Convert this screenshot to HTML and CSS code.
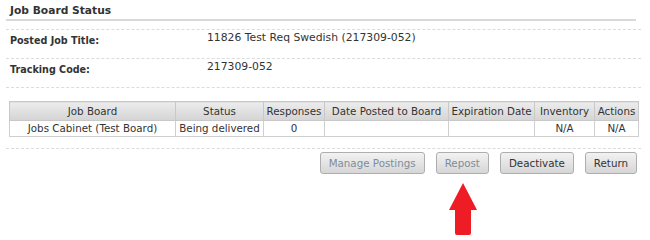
FILE: index.html
```html
<!DOCTYPE html>
<html>
<head>
<meta charset="utf-8">
<link rel="stylesheet" href="styles.css">
</head>
<body>
<div class="wrap">
  <h2 class="title">Job Board Status</h2>
  <div class="field">
    <div class="label">Posted Job Title:</div>
    <div class="value">11826 Test Req Swedish (217309-052)</div>
  </div>
  <div class="field">
    <div class="label">Tracking Code:</div>
    <div class="value">217309-052</div>
  </div>
  <div class="table-area">
    <table class="grid">
      <colgroup>
        <col class="c1"><col class="c2"><col class="c3"><col class="c4"><col class="c5"><col class="c6"><col class="c7">
      </colgroup>
      <thead>
        <tr>
          <th>Job Board</th><th>Status</th><th>Responses</th><th>Date Posted to Board</th><th>Expiration Date</th><th>Inventory</th><th>Actions</th>
        </tr>
      </thead>
      <tbody>
        <tr>
          <td>Jobs Cabinet (Test Board)</td><td>Being delivered</td><td>0</td><td></td><td></td><td>N/A</td><td>N/A</td>
        </tr>
      </tbody>
    </table>
  </div>
  <div class="actions">
    <button class="btn disabled">Manage Postings</button>
    <button class="btn disabled">Repost</button>
    <button class="btn">Deactivate</button>
    <button class="btn">Return</button>
  </div>
</div>
<svg class="arrow" width="30" height="53" viewBox="0 0 30 53">
  <path d="M14 0 L28 27 L22 27 L22 50 Q22 52 20 52 L8 52 Q6 52 6 50 L6 27 L0 27 Z" fill="#ee1c24"/>
</svg>
</body>
</html>
```
FILE: styles.css
```css
body {
  margin: 0;
  font-family: "DejaVu Sans", Verdana, sans-serif;
  font-size: 11px;
  color: #333;
  background: #fff;
  position: relative;
  width: 650px;
  height: 237px;
  overflow: hidden;
}
.wrap {
  margin-left: 6px;
  width: 635px;
}
.title {
  margin: 0;
  width: 626px;
  height: 19px;
  padding: 0 0 0 4px;
  font-size: 10.7px;
  font-weight: bold;
  line-height: 22px;
  border-bottom: 2px solid #d9d9d9;
  box-sizing: content-box;
}
.field {
  margin-top: 8px;
  border-top: 1px dashed #dcdcdc;
  display: flex;
  height: 28px;
}
.field + .field {
  margin-top: 0;
}
.label {
  width: 197px;
  padding-left: 4px;
  font-weight: bold;
  font-size: 9.6px;
  padding-top: 3px;
  line-height: 16px;
}
.value {
  padding-top: 0;
  line-height: 16px;
  font-size: 10.8px;
}
.table-area {
  border-top: 1px dashed #dcdcdc;
  padding: 13px 0 11px 3px;
  border-bottom: 1px dashed #dcdcdc;
}
.grid {
  border-collapse: collapse;
  width: 629px;
  table-layout: fixed;
  font-size: 10.3px;
}
.c1 { width: 166px; }
.c2 { width: 88px; }
.c3 { width: 61px; }
.c4 { width: 124px; }
.c5 { width: 86px; }
.c6 { width: 60px; }
.c7 { width: 44px; }
.grid th, .grid td {
  border: 1px solid #cfcfcf;
  text-align: center;
  padding: 0 1px;
  white-space: nowrap;
  overflow: hidden;
}
.grid th {
  font-weight: normal;
  height: 18px;
  line-height: 18px;
  background: linear-gradient(#ececec, #d4d4d4);
  border-color: #c8c8c8;
}
.grid th + th {
  border-left-color: #ececec;
}
.grid td {
  height: 15px;
  line-height: 15px;
  background: #fff;
}
.actions {
  display: flex;
  justify-content: flex-end;
  gap: 11px;
  padding-top: 3px;
  padding-right: 4px;
}
.btn {
  font-family: "DejaVu Sans", Verdana, sans-serif;
  font-size: 10.3px;
  color: #333;
  height: 22px;
  padding: 0 8px;
  border: 1px solid #aeaeae;
  border-radius: 3px;
  background: linear-gradient(#f2f2f2, #d6d6d6);
  line-height: 20px;
}
.btn.disabled {
  color: #7f8c99;
}
.arrow {
  position: absolute;
  left: 449px;
  top: 183px;
}
```
